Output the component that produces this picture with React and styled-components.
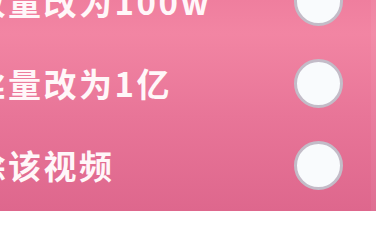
import React from 'react'
import styled, { createGlobalStyle } from 'styled-components'

const GlobalStyle = createGlobalStyle`
    html, body {
        margin: 0;
        padding: 0;
        width: 376px;
        height: 211px;
        overflow: hidden;
    }
    body {
        font-family: "Noto Sans CJK SC", "Noto Sans", sans-serif;
    }
`

const Page = styled.div`
    width: 376px;
    height: 211px;
    overflow: hidden;
    display: flex;
    background: linear-gradient(180deg, #ef7e9e 0%, #f285a3 16%, #e87598 55%, #de678d 100%);
`

const List = styled.div`
    flex: 1;
    margin-top: -40px;
    display: flex;
    flex-direction: column;
`

const Edge = styled.div`
    width: 5px;
    background: rgba(255, 255, 255, 0.06);
`

const Row = styled.div`
    height: 82px;
    flex-shrink: 0;
    display: flex;
    align-items: center;
    justify-content: space-between;
    padding-right: 28px;
`

const Label = styled.span`
    margin-left: -63px;
    font-size: 33px;
    font-weight: 700;
    letter-spacing: 2.5px;
    color: #fff7f9;
    white-space: nowrap;
    line-height: 1;
`

const Radio = styled.span`
    width: 43px;
    height: 43px;
    border-radius: 50%;
    border: 3px solid #c3bcc8;
    background: ${p => (p.checked ? '#fce3ea' : '#f9fbfd')};
    flex-shrink: 0;
`

const options = [
    '播放量改为100w',
    '粉丝量改为1亿',
    '删除该视频',
    '评论量改为1万',
]

export default function App() {
    return (
        <>
            <GlobalStyle />
            <Page>
                <List>
                    {options.map(text => (
                        <Row key={text}>
                            <Label>{text}</Label>
                            <Radio />
                        </Row>
                    ))}
                </List>
                <Edge />
            </Page>
        </>
    )
}
